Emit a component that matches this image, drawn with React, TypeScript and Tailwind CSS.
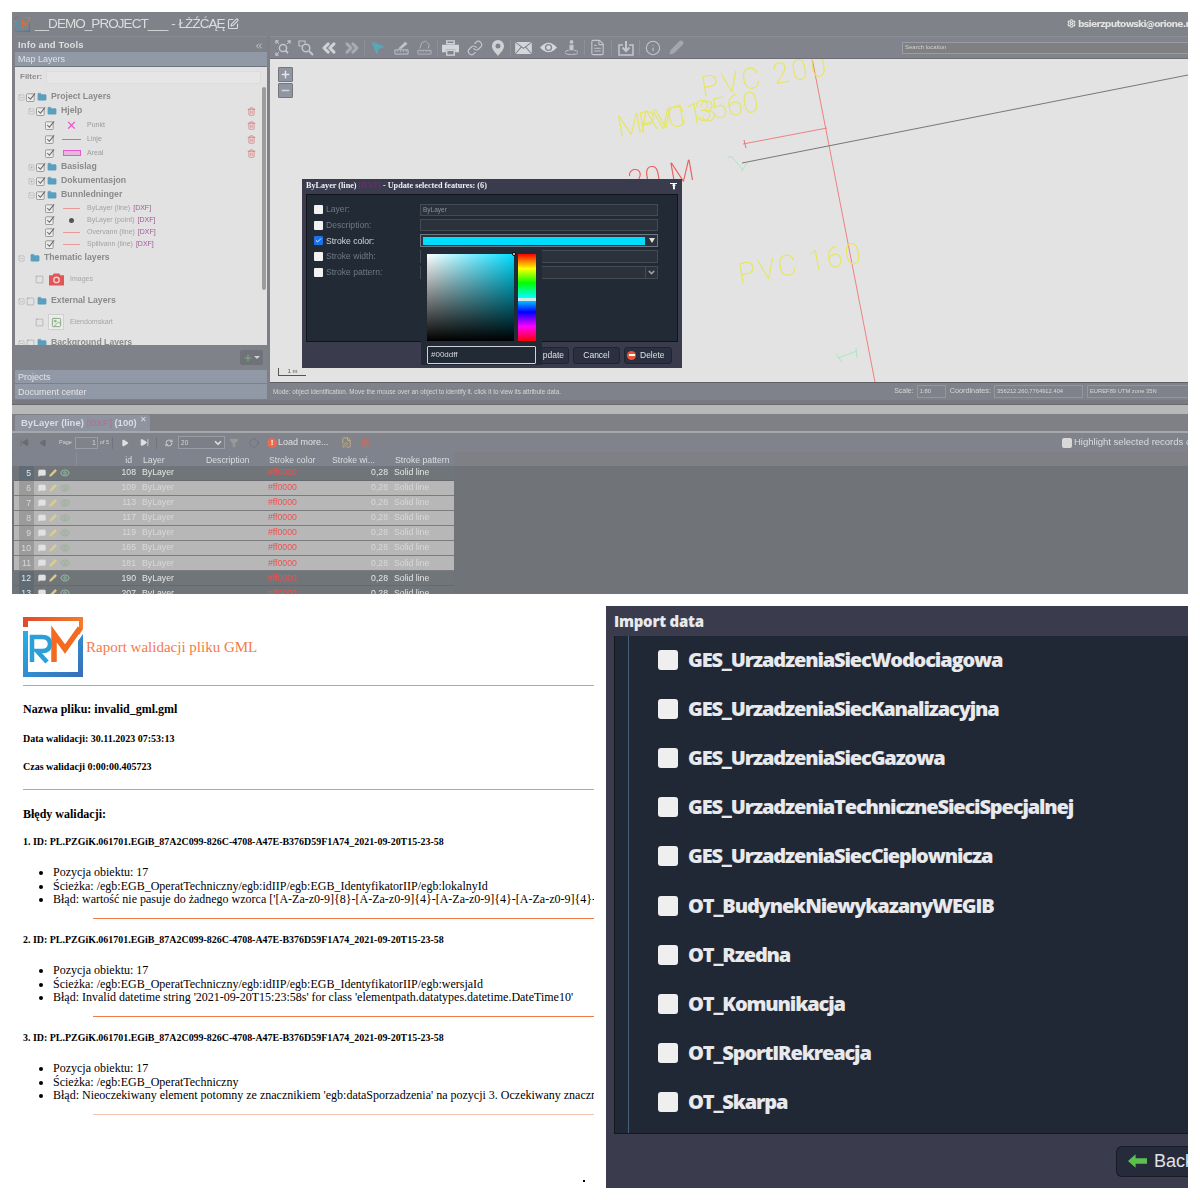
import React from 'react';
import {
  ChevronsLeft, ChevronsRight, MousePointer2, Link, FileText, Info, Pencil,
  Folder, Trash2, Square, SquarePlus, SquareMinus, Settings, SquarePen, Plus, Minus, ChevronDown, Check, Image, RefreshCw, Circle,
  SkipBack, SkipForward, Play, FilePen, MessageSquare, Funnel, Eye
} from 'lucide-react';

function Logo({ className }: { className: string }) {
  return (
    <svg viewBox="0 0 60 60" className={className}>
      <defs>
        <linearGradient id="rmTop" x1="0" x2="1" y1="0" y2="0"><stop offset="0" stopColor="#e2492a" /><stop offset="1" stopColor="#f47b2c" /></linearGradient>
        <linearGradient id="rmBlue" x1="0" x2="1" y1="0" y2="1"><stop offset="0" stopColor="#26b0e8" /><stop offset="1" stopColor="#3a6cb8" /></linearGradient>
      </defs>
      <path d="M0 0H60V12L56 18V4H5V10H0Z" fill="url(#rmTop)" />
      <path d="M0 14H5V55H55V24L60 17V60H0Z" fill="url(#rmBlue)" />
      <path d="M9 45V20H19Q27 20 27 27Q27 34 19 34H14L24 45" fill="none" stroke="#2a9fd8" strokeWidth="4.5" />
      <path d="M31 45V17L42 32L57 11" fill="none" stroke="#f26b21" strokeWidth="5.5" />
    </svg>
  );
}

function Tool({ slot, children }: { slot: string; children: React.ReactNode }) {
  return <div className={`${slot} h-[15px] flex items-center justify-center shrink-0 text-[#c4c6cb]`}>{children}</div>;
}

function TreeBox() {
  return (
    <svg viewBox="0 0 11 11" className="w-[10px] h-[10px] shrink-0">
      <rect x="0.5" y="2" width="8.5" height="8.5" rx="1" fill="#ececec" stroke="#929292" strokeWidth="1" />
      <path d="M2.5 5.5L4.8 8L10 1.5" fill="none" stroke="#666" strokeWidth="1.2" />
    </svg>
  );
}

function Group({ h, pad, open = true, name, box = true, gap = 'ml-[1px]', trash = false }: { h: string; pad: string; open?: boolean; name: string; box?: boolean; gap?: string; trash?: boolean }) {
  return (
    <div className={`${h} ${pad} flex items-center relative`}>
      {open ? <SquareMinus size={7} strokeWidth={1.2} className="text-[#909090] shrink-0" /> : <SquarePlus size={7} strokeWidth={1.2} className="text-[#909090] shrink-0" />}
      <span className="ml-[1px] flex"><span className={box ? 'flex' : 'hidden'}><TreeBox /></span></span>
      <Folder size={10} fill="#5a9fbb" strokeWidth={1} className={`text-[#5a9fbb] shrink-0 ${gap}`} />
      <span className="ml-[4px] text-[8.7px] font-bold text-[#8a8a8a]">{name}</span>
      {trash && <Trash2 size={9} strokeWidth={1.5} className="absolute right-[11px] top-[3px] text-[#d85a5a]" />}
    </div>
  );
}

function Legend({ name, children }: { name: string; children: React.ReactNode }) {
  return (
    <div className="h-[14px] pl-[27px] flex items-center relative">
      <TreeBox />
      <span className="w-[29px] ml-[2px] flex items-center justify-center">{children}</span>
      <span className="text-[7px] text-[#9a9a9a] ml-[1px]">{name}</span>
      <Trash2 size={9} strokeWidth={1.5} className="absolute right-[11px] top-[3px] text-[#d85a5a]" />
    </div>
  );
}

function Dxf({ name, children }: { name: string; children: React.ReactNode }) {
  return (
    <div className="h-[12px] pl-[27px] flex items-center">
      <TreeBox />
      <span className="w-[29px] ml-[2px] flex items-center justify-center">{children}</span>
      <span className="text-[7px] text-[#a2a2a2] ml-[1px]">{name}</span>
      <span className="text-[7px] text-[#a05a98] ml-[3px]">[DXF]</span>
    </div>
  );
}

function FormRow({ label, active = false, on = false, children }: { label: string; active?: boolean; on?: boolean; children?: React.ReactNode }) {
  return (
    <div className="h-[15.6px] flex items-center">
      <span className={`w-[9px] h-[9px] rounded-[1px] flex items-center justify-center ml-[7px] shrink-0 ${on ? 'bg-[#1a73e8]' : 'bg-[#f2f2f2]'}`}>
        {on && <Check size={7} strokeWidth={3} className="text-white" />}
      </span>
      <span className={`ml-[3px] w-[92px] text-[8.6px] ${active ? 'text-[#d4d8dd]' : 'text-[#707a84]'}`}>{label}</span>
      {children}
    </div>
  );
}

const rows = [
  ['5', '108', false], ['6', '109', true], ['7', '113', true], ['8', '117', true], ['9', '119', true],
  ['10', '165', true], ['11', '181', true], ['12', '190', false], ['13', '207', false],
] as const;

const features = [
  'GES_UrzadzeniaSiecWodociagowa', 'GES_UrzadzeniaSiecKanalizacyjna', 'GES_UrzadzeniaSiecGazowa', 'GES_UrzadzeniaTechniczneSieciSpecjalnej',
  'GES_UrzadzeniaSiecCieplownicza', 'OT_BudynekNiewykazanyWEGIB', 'OT_Rzedna', 'OT_Komunikacja', 'OT_SportIRekreacja', 'OT_Skarpa',
];

const errors = [
  { n: '1', path: '/egb:EGB_OperatTechniczny/egb:idIIP/egb:EGB_IdentyfikatorIIP/egb:lokalnyId', msg: "wartość nie pasuje do żadnego wzorca ['[A-Za-z0-9]{8}-[A-Za-z0-9]{4}-[A-Za-z0-9]{4}-[A-Za-z0-9]{4}-[A-Za-z0-9]{12}']", line: 'bg-[#f07c42]' },
  { n: '2', path: '/egb:EGB_OperatTechniczny/egb:idIIP/egb:EGB_IdentyfikatorIIP/egb:wersjaId', msg: "Invalid datetime string '2021-09-20T15:23:58s' for class 'elementpath.datatypes.datetime.DateTime10'", line: 'bg-[#f07c42]' },
  { n: '3', path: '/egb:EGB_OperatTechniczny', msg: "Nieoczekiwany element potomny ze znacznikiem 'egb:dataSporzadzenia' na pozycji 3. Oczekiwany znacznik to", line: 'bg-[#f6c4ae]' },
];

const sw = { fill: 'none', stroke: 'currentColor', strokeWidth: 1.5 };

export default function App() {
  return (
    <div className="w-[1200px] h-[1200px] bg-white p-3 flex flex-col overflow-hidden font-['Liberation_Sans',sans-serif]">
      {/* GIS application */}
      <div className="w-[1176px] h-[582px] shrink-0 bg-[#7f8085] overflow-hidden flex flex-col blur-[0.3px]">
        <div className="h-[24px] shrink-0 bg-[#80828a] flex items-center pl-[3px] pr-0 justify-between">
          <div className="flex items-center">
            <Logo className="w-[15px] h-[15px] opacity-70" />
            <span className="ml-[5px] text-[13.5px] tracking-[-0.95px] [word-spacing:1px] text-[#dcdcdc]">__DEMO_PROJECT___ - ŁŻŹĆĄĘ</span>
            <SquarePen size={12} strokeWidth={2.2} className="ml-[2px] text-[#dcdcdc]" />
          </div>
          <div className="flex items-center text-[#e2e2e2] whitespace-nowrap overflow-hidden w-[121px]">
            <Settings size={9} strokeWidth={3} className="shrink-0" />
            <span className="ml-[2px] text-[9.2px] font-bold font-['DejaVu_Sans',sans-serif] tracking-[-0.75px]">bsierzputowski@orione.no</span>
          </div>
        </div>

        <div className="h-[364px] shrink-0 flex">
          {/* left panel */}
          <div className="w-[255px] shrink-0 pl-[3px] flex flex-col">
            <div className="h-[16px] shrink-0 bg-[#7f828b] flex items-center justify-between px-[3px] pt-[2px] border-t border-[#8a8c93]">
              <span className="text-[9.5px] font-bold text-[#dedede] tracking-[0.1px]">Info and Tools</span>
              <ChevronsLeft size={10} className="text-[#d6d6d6]" />
            </div>
            <div className="h-[15px] shrink-0 bg-[#9299a6] border-b border-[#6f737c] flex items-center px-[3px] pt-[2px] text-[9px] text-[#dfe2e6]">Map Layers</div>
            <div className="h-[20px] shrink-0 bg-[#e2e2e2] flex items-center px-[5px]">
              <span className="text-[8px] font-bold text-[#8e8e8e]">Filter:</span>
              <div className="ml-[4px] flex-1 h-[13px] bg-[#e6e6e6] border border-[#dcdcdc] mr-[1px]" />
            </div>
            <div className="h-[258px] shrink-0 bg-[#e2e2e2] overflow-hidden relative pt-[3px] pl-[3px]">
              <div className="absolute right-[1px] top-0 w-[4px] h-[203px] bg-[#9c9c9c] rounded-[2px]" />
              <Group h="h-[14px]" pad="pl-0" name="Project Layers" />
              <Group h="h-[14px]" pad="pl-[10px]" name="Hjelp" trash />
              <Legend name="Punkt"><span className="text-[13px] leading-none text-[#e85ac8]">✕</span></Legend>
              <Legend name="Linje"><span className="w-[19px] h-[1px] bg-[#e85ac8] block" /></Legend>
              <Legend name="Areal"><span className="w-[18px] h-[6px] bg-[#e4b8dc] border border-[#e85ac8] block" /></Legend>
              <Group h="h-[14px]" pad="pl-[10px]" open={false} name="Basislag" />
              <Group h="h-[14px]" pad="pl-[10px]" open={false} name="Dokumentasjon" />
              <Group h="h-[14px]" pad="pl-[10px]" name="Bunnledninger" />
              <Dxf name="ByLayer (line)"><span className="w-[17px] h-[1px] bg-[#e89a9a] block" /></Dxf>
              <Dxf name="ByLayer (point)"><span className="w-[5px] h-[5px] rounded-full bg-[#555] block" /></Dxf>
              <Dxf name="Overvann (line)"><span className="w-[17px] h-[1px] bg-[#e89a9a] block" /></Dxf>
              <Dxf name="Spillvann (line)"><span className="w-[17px] h-[1px] bg-[#e89a9a] block" /></Dxf>
              <Group h="h-[16px]" pad="pl-0" name="Thematic layers" box={false} gap="ml-[4px]" />
              <div className="h-[26px] pl-[17px] flex items-center">
                <Square size={9} strokeWidth={1.2} className="text-[#8b8b8b]" />
                <svg viewBox="0 0 16 13" className="ml-[5px] w-[15px] h-[13px]">
                  <path d="M0 2H4L5 0H11L12 2H16V13H0Z" fill="#e25555" />
                  <circle cx="8" cy="7" r="3.6" fill="#f4d0d0" />
                  <circle cx="8" cy="7" r="2.2" fill="#e25555" />
                </svg>
                <span className="ml-[6px] text-[7px] text-[#a6a6a6]">Images</span>
              </div>
              <div className="h-[18px] flex items-center">
                <SquareMinus size={7} strokeWidth={1.2} className="text-[#909090]" />
                <Square size={9} strokeWidth={1.2} className="ml-[1px] text-[#8b8b8b]" />
                <Folder size={10} fill="#5a9fbb" strokeWidth={1} className="ml-[2px] text-[#5a9fbb]" />
                <span className="ml-[4px] text-[8.7px] font-bold text-[#8a8a8a]">External Layers</span>
              </div>
              <div className="h-[24px] pl-[17px] flex items-center">
                <Square size={9} strokeWidth={1.2} className="text-[#8b8b8b]" />
                <span className="ml-[4px] w-[16px] h-[16px] border border-[#cfcfcf] bg-[#ececec] flex items-center justify-center">
                  <Image size={11} className="text-[#7fa678]" />
                </span>
                <span className="ml-[6px] text-[7px] text-[#a6a6a6]">Eiendomskart</span>
              </div>
              <div className="h-[14px] mt-[2px] flex items-center">
                <SquareMinus size={7} strokeWidth={1.2} className="text-[#909090]" />
                <Square size={9} strokeWidth={1.2} className="ml-[1px] text-[#8b8b8b]" />
                <Folder size={10} fill="#5a9fbb" strokeWidth={1} className="ml-[2px] text-[#5a9fbb]" />
                <span className="ml-[4px] text-[8.7px] font-bold text-[#8a8a8a]">Background Layers</span>
              </div>
            </div>
            <div className="h-[25px] shrink-0 bg-[#7f8289] flex items-center justify-end pr-[4px]">
              <div className="w-[23px] h-[15px] rounded-[2px] bg-[#6f7278] flex items-center justify-center">
                <Plus size={10} strokeWidth={2.5} className="text-[#7fae78]" />
                <span className="ml-[1px] border-x-[3px] border-t-[3px] border-x-transparent border-t-[#d0d0d0]" />
              </div>
            </div>
            <div className="h-[14px] shrink-0 bg-[#9299a6] border-b border-[#7c808a] flex items-center px-[3px] pt-[2px] text-[9px] text-[#e2e4e8]">Projects</div>
            <div className="h-[15px] shrink-0 bg-[#9299a6] flex items-center px-[3px] pt-[2px] text-[9px] text-[#e2e4e8]">Document center</div>
          </div>

          {/* map column */}
          <div className="flex-1 ml-[3px] flex flex-col min-w-0">
            <div className="h-[23px] shrink-0 bg-[#81848c] border-t border-[#8c8e95] border-b-[1px] border-b-[#6c6e74] flex items-center pl-[2px]">
              <Tool slot="w-[22.5px]">
                <svg viewBox="0 0 16 16" className="w-[16px] h-[16px]" {...sw}><circle cx="8" cy="8" r="3.6" /><path d="M10.6 10.6L13 13" strokeWidth="2" /><path d="M1 3.5V1H3.5M15 3.5V1H12.5M1 12.5V15H3.5" strokeWidth="1.4" /><path d="M1.5 1.5L4 4M14.5 1.5L12 4M1.5 14.5L4 12" strokeWidth="1" /></svg>
              </Tool>
              <Tool slot="w-[22.5px]">
                <svg viewBox="0 0 16 16" className="w-[16px] h-[16px]" {...sw}><path d="M4.5 6H1V1H7V3.5" strokeWidth="1.1" /><circle cx="8" cy="8" r="3.8" /><path d="M11 11L15 15" strokeWidth="2" /></svg>
              </Tool>
              <Tool slot="w-[23px]"><ChevronsLeft size={20} strokeWidth={3.6} className="text-[#d0d2d6]" /></Tool>
              <Tool slot="w-[24.5px] border-r border-[#8e9097]"><ChevronsRight size={20} strokeWidth={3.6} className="text-[#a9abb0]" /></Tool>
              <Tool slot="w-[25px]"><MousePointer2 size={15} fill="#5ba6b8" className="text-[#5ba6b8]" /></Tool>
              <Tool slot="w-[23px]">
                <svg viewBox="0 0 16 16" className="w-[15px] h-[15px]" {...sw}><path d="M1 10.5H15V15H1Z" strokeWidth="1" /><path d="M4 11V13M7 11V13M10 11V13M13 11V13" strokeWidth="0.8" /><path d="M5 9L12 2L14 4L8 9Z" fill="currentColor" strokeWidth="0.6" /></svg>
              </Tool>
              <Tool slot="w-[25.5px] border-r border-[#8e9097]">
                <svg viewBox="0 0 16 16" className="w-[15px] h-[15px] text-[#b2b4b9]" {...sw}><path d="M1 11H15V15H1Z" strokeWidth="1" /><path d="M4 11V13M7 11V13M10 11V13M13 11V13" strokeWidth="0.8" /><path d="M3 9L5 3L9 1L13 5L12 9" strokeWidth="1" /></svg>
              </Tool>
              <Tool slot="w-[25.5px]">
                <svg viewBox="0 0 18 17" className="w-[17px] h-[16px] text-[#d4d6da]"><path d="M5 4V1H13V4H5Z" fill="none" stroke="currentColor" strokeWidth="1.4" /><path d="M0 5H18V13H14V10H4V13H0Z" fill="currentColor" /><path d="M5 11H13V16H5Z" fill="none" stroke="currentColor" strokeWidth="1.4" /></svg>
              </Tool>
              <Tool slot="w-[22.5px]"><Link size={16} strokeWidth={1.8} /></Tool>
              <Tool slot="w-[25px] border-r border-[#8e9097]">
                <svg viewBox="0 0 12 16" className="w-[12px] h-[16px] text-[#d0d2d6]"><path fillRule="evenodd" d="M6 0A6 6 0 0 1 12 6C12 10 8 13 6 16C4 13 0 10 0 6A6 6 0 0 1 6 0ZM6 3.5A2.5 2.5 0 1 0 6 8.5A2.5 2.5 0 1 0 6 3.5Z" fill="currentColor" /></svg>
              </Tool>
              <Tool slot="w-[25.5px]">
                <svg viewBox="0 0 18 13" className="w-[17px] h-[12px] text-[#d4d6da]"><rect width="18" height="13" fill="currentColor" /><path d="M0 0L9 7L18 0M0 13L6.5 5.5M18 13L11.5 5.5" fill="none" stroke="#81848c" strokeWidth="1.1" /></svg>
              </Tool>
              <Tool slot="w-[23px]">
                <svg viewBox="0 0 17 11" className="w-[17px] h-[11px] text-[#d4d6da]"><path d="M0 5.5Q8.5 -4 17 5.5Q8.5 15 0 5.5Z" fill="currentColor" /><circle cx="8.5" cy="5.5" r="3.6" fill="#81848c" /><circle cx="8.5" cy="5.5" r="2.3" fill="currentColor" /></svg>
              </Tool>
              <Tool slot="w-[25px] border-r border-[#8e9097]">
                <svg viewBox="0 0 14 16" className="w-[13px] h-[15px]"><circle cx="7" cy="2" r="2" fill="currentColor" /><path d="M4.8 5H9.2V11H4.8Z" fill="currentColor" /><path d="M4 11C1 11.5 0 12.5 0 13.5C0 15 3 15.5 7 15.5C11 15.5 14 15 14 13.5C14 12.5 13 11.5 10 11" fill="none" stroke="currentColor" strokeWidth="1" /></svg>
              </Tool>
              <Tool slot="w-[27.5px] border-r border-[#8e9097]"><FileText size={17} strokeWidth={1.6} /></Tool>
              <Tool slot="w-[28px] border-r border-[#8e9097]">
                <svg viewBox="0 0 16 16" className="w-[16px] h-[16px]" {...sw}><path d="M5 5H1V15H15V5H11" /><path d="M8 1V10" strokeWidth="2" /><path d="M4.5 7.5L8 11L11.5 7.5" strokeWidth="2" /></svg>
              </Tool>
              <Tool slot="w-[25px]"><Info size={16} strokeWidth={1.6} /></Tool>
              <Tool slot="w-[22px]"><Pencil size={15} fill="#a5a7ac" className="text-[#a5a7ac]" /></Tool>
              <div className="ml-auto w-[286px] h-[12px] bg-[#808080] border-y border-l border-[#9a9da5] flex items-center pl-[2px] text-[6px] text-[#d0d0d0]">Search location</div>
            </div>
            <div className="h-[323px] shrink-0 bg-[#e3e3e3] relative overflow-hidden">
              <svg viewBox="270 59 918 323" className="absolute inset-0 w-[918px] h-[323px]">
                <line x1="812" y1="58" x2="875" y2="382" stroke="#ee8080" strokeWidth="1" />
                <line x1="743" y1="144" x2="827" y2="128" stroke="#ee8080" strokeWidth="1" />
                <line x1="744" y1="140" x2="746" y2="148" stroke="#ee7070" strokeWidth="1" />
                <line x1="742" y1="163" x2="1188" y2="75" stroke="#777" strokeWidth="1" />
                <path d="M728 157L732 157L743 170M741 172L747 163" fill="none" stroke="#a8e8c0" strokeWidth="1" />
                <path d="M836 354L842 362M838 358L857 351M856 348L857 358" fill="none" stroke="#a8e8c0" strokeWidth="1" />
                <g fontFamily="Roboto, sans-serif" fontWeight="200" fill="#e6e660" fontSize="29">
                  <text transform="translate(703 97) rotate(-10)" letterSpacing="3">PVC 200</text>
                  <text transform="translate(740 284) rotate(-10)" letterSpacing="2.6">PVC 160</text>
                  <text transform="translate(619 137) rotate(-10)" letterSpacing="-3">MPVC 13</text>
                  <text transform="translate(641 132) rotate(-10)" letterSpacing="0">AV1 3560</text>
                </g>
                <text transform="translate(630 191) rotate(-10)" fontFamily="Roboto, sans-serif" fontWeight="200" fill="#e86060" fontSize="29" letterSpacing="1">20 M</text>
              </svg>

              <div className="absolute left-[8px] top-[8px] w-[15px] flex flex-col gap-[1px]">
                <div className="h-[15px] bg-[#8f95a3] border border-[#777] rounded-[1px] flex items-center justify-center"><Plus size={11} strokeWidth={3} className="text-[#e6e6e6]" /></div>
                <div className="h-[15px] bg-[#8f95a3] border border-[#777] rounded-[1px] flex items-center justify-center"><Minus size={11} strokeWidth={3} className="text-[#d6d6d6]" /></div>
              </div>

              <div className="absolute left-[8px] bottom-[6px] w-[28px] h-[8px] border-l border-b border-[#555] text-[6px] leading-[7px] text-[#555] text-center">1 m</div>

              {/* dialog */}
              <div className="absolute left-[32px] top-[120px] w-[380px] h-[189px] bg-[#3a3c4d] flex flex-col">
                <div className="h-[15px] shrink-0 flex items-center justify-between pl-[4px] pr-[5px] text-[8.2px] font-bold font-['Liberation_Serif',serif] text-[#eef0f3]">
                  <span>ByLayer (line) <span className="text-[#6b2d6b]">[DXF]</span> - Update selected features: (6)</span>
                  <div className="w-[7px] h-[8px] border-t border-white flex justify-center"><span className="text-[7px] leading-[7px] text-white">⬆</span></div>
                </div>
                <div className="h-[148px] shrink-0 mx-[4px] bg-[#212a35] border border-[#10141a] pt-[2px] flex flex-col">
                  <div className="mt-[5px]" />
                  <FormRow label="Layer:"><div className="ml-[2px] w-[238px] h-[12px] bg-[#2c323c] border border-[#454b55] text-[6.5px] leading-[10px] pl-[2px] text-[#8a9098]">ByLayer</div></FormRow>
                  <FormRow label="Description:"><div className="ml-[2px] w-[238px] h-[12px] bg-[#2c323c] border border-[#454b55]" /></FormRow>
                  <FormRow label="Stroke color:" active on>
                    <div className="ml-[2px] w-[238px] h-[13px] bg-[#2c323c] border border-[#6e7785] flex items-center pl-[2px]">
                      <div className="w-[222px] h-[8px] bg-[#00ddff]" />
                      <span className="ml-[4px] border-x-[3px] border-t-[5px] border-x-transparent border-t-[#e0e0e0]" />
                    </div>
                  </FormRow>
                  <FormRow label="Stroke width:"><div className="ml-[2px] w-[238px] h-[13px] bg-[#2c323c] border border-[#454b55]" /></FormRow>
                  <FormRow label="Stroke pattern:">
                    <div className="ml-[2px] w-[238px] h-[13px] bg-[#2c323c] border border-[#454b55] flex justify-end">
                      <div className="w-[12px] border-l border-[#454b55] flex items-center justify-center"><ChevronDown size={9} strokeWidth={4} className="text-[#9aa0a8]" /></div>
                    </div>
                  </FormRow>
                </div>
                <div className="flex-1 flex items-center justify-end pr-[10px] gap-[4px]">
                  <div className="w-[60px] h-[17px] rounded-[3px] bg-[#2a3040] border border-[#20242e] text-[8.5px] leading-[15px] text-[#dfe1e4] text-right pr-[4px]">Update</div>
                  <div className="w-[47px] h-[17px] rounded-[3px] bg-[#2a3040] border border-[#20242e] text-[8.5px] leading-[15px] text-[#dfe1e4] text-center">Cancel</div>
                  <div className="w-[48px] h-[17px] rounded-[3px] bg-[#2a3040] border border-[#20242e] flex items-center pl-[2px] text-[8.5px] text-[#dfe1e4]">
                    <span className="w-[9px] h-[9px] rounded-full bg-[#e8553a] flex items-center justify-center"><span className="w-[6px] h-[2px] bg-white" /></span>
                    <span className="ml-[4px]">Delete</span>
                  </div>
                </div>
                {/* colour picker */}
                <div className="absolute left-[119px] top-[71px] w-[121px] h-[115px] bg-[#222a35] pt-[4px] pl-[6px]">
                  <div className="flex gap-[4px]">
                    <div className="w-[87px] h-[87px] bg-[linear-gradient(to_top,#000,transparent),linear-gradient(to_right,#fff,#00ddff)] relative">
                      <span className="absolute -right-[2px] -top-[2px] w-[4px] h-[4px] rounded-full bg-white border border-black" />
                    </div>
                    <div className="w-[18px] h-[87px] relative bg-[linear-gradient(to_bottom,#f00,#ff0,#0f0,#0ff,#00f,#f0f,#f00)]">
                      <span className="absolute left-0 right-0 top-[44px] h-[3px] bg-[#cfe8ea]" />
                    </div>
                  </div>
                  <div className="mt-[5px] w-[109px] h-[18px] border border-[#cfd2d6] rounded-[1px] text-[8px] leading-[16px] pl-[3px] text-[#d4d6da] bg-[#212a35]">#00ddff</div>
                </div>
              </div>
            </div>
            <div className="h-[18px] shrink-0 bg-[#7f828a] border-t border-[#5e6066] flex items-center pl-[3px] text-[5.8px] text-[#d8d8d8]">
              <span className="text-[6.3px]">Mode: object identification. Move the mouse over an object to identify it. click it to view its attribute data.</span>
              <span className="ml-auto text-[7px]">Scale:</span>
              <div className="ml-[3px] w-[29px] h-[13px] border border-[#94979e] pl-[2px] leading-[11px]">1:80</div>
              <span className="ml-[4px] text-[7.3px]">Coordinates:</span>
              <div className="ml-[3px] w-[89px] h-[13px] border border-[#94979e] pl-[2px] leading-[11px]">356212.260,7764912.404</div>
              <div className="ml-[4px] w-[101px] h-[13px] border-y border-l border-[#94979e] pl-[2px] leading-[11px]">EUREF89 UTM zone 35N</div>
            </div>
          </div>
        </div>

        <div className="h-[5px] shrink-0 bg-[#787a7f] border-b border-[#66686c]" />
        <div className="h-[9px] shrink-0 bg-[#b8b8b8]" />

        <div className="h-[19px] shrink-0 flex items-end pl-[3px] border-b-[2px] border-[#a6a7aa]">
          <div className="w-[135px] h-[16px] rounded-t-[2px] bg-[#8e93a0] pl-[6px] flex items-center text-[9.5px] font-bold text-[#dadde2] whitespace-nowrap">
            ByLayer (line)&nbsp;<span className="text-[#a57a98]">[DXF]</span>&nbsp;(100)
            <span className="ml-[3px] -mt-[7px] text-[8px] font-normal text-[#dcdcdc]">✕</span>
          </div>
        </div>

        <div className="h-[19px] shrink-0 bg-[#80838b] flex items-center text-[#d4d4d4]">
          <span className="w-[8px] shrink-0" />
          <SkipBack size={9} fill="#696c73" className="text-[#696c73]" />
          <span className="ml-[10px] flex"><Play size={8} fill="#696c73" className="rotate-180 text-[#696c73]" /></span>
          <span className="ml-[12px] text-[5.5px]">Page</span>
          <div className="ml-[3px] w-[23px] h-[12px] border border-[#9a9da5] text-right pr-[1px] text-[7px] leading-[10px]">1</div>
          <span className="ml-[2px] text-[5.5px]">of 5</span>
          <span className="ml-[3px] w-[1px] h-[12px] bg-[#72757c]" />
          <span className="ml-[8px] flex"><Play size={8} fill="#e0e0e0" className="text-[#e0e0e0]" /></span>
          <span className="ml-[11px] flex"><SkipForward size={9} fill="#e0e0e0" className="text-[#e0e0e0]" /></span>
          <span className="ml-[7px] w-[1px] h-[12px] bg-[#72757c]" />
          <span className="ml-[8px] flex"><RefreshCw size={8} strokeWidth={2.5} className="text-[#d8d8d8]" /></span>
          <div className="ml-[5px] w-[47px] h-[13px] bg-[#7c7f87] border border-[#9a9da5] flex items-center justify-between pl-[2px] pr-[1px] text-[6.5px]">
            <span>20</span>
            <ChevronDown size={10} strokeWidth={4} className="text-[#e0e0e0]" />
          </div>
          <span className="ml-[4px] flex"><Funnel size={10} fill="#9a9a9a" className="text-[#9a9a9a]" /></span>
          <span className="ml-[10px] flex"><Circle size={10} strokeWidth={2} className="text-[#6f7279]" /></span>
          <span className="ml-[8px] w-[10px] h-[10px] rounded-full bg-[#e86a50] text-white text-[8px] leading-[10px] text-center font-bold">!</span>
          <span className="ml-[1px] text-[9px] text-[#dfe0e2]">Load more...</span>
          <span className="ml-[12px] flex"><FilePen size={11} className="text-[#c8b080]" /></span>
          <span className="ml-[8px] flex"><Trash2 size={10} className="text-[#d06a5a]" /></span>
          <div className="ml-auto w-[126px] overflow-hidden whitespace-nowrap flex items-center">
            <span className="w-[10px] h-[10px] rounded-[2px] bg-[#d8d8d8] shrink-0" />
            <span className="ml-[2px] text-[9.5px] text-[#dcdde0]">Highlight selected records only</span>
          </div>
        </div>

        <div className="w-[440px] h-[15px] shrink-0 bg-[#7f838d] ml-[2px] flex text-[8.7px] text-[#dcdde0] leading-[17px]">
          <div className="w-[20px]" />
          <div className="w-[43px] border-r border-[#8a8e98]" />
          <div className="w-[62px] text-right pr-[7px]">id</div>
          <div className="w-[63px] pl-[4px]">Layer</div>
          <div className="w-[63px] pl-[4px]">Description</div>
          <div className="w-[63px] pl-[4px]">Stroke color</div>
          <div className="w-[63px] pl-[4px]">Stroke wi...</div>
          <div className="w-[61px] pl-[4px]">Stroke pattern</div>
        </div>

        <div className="flex-1 overflow-hidden bg-[#707377] -mt-[1.5px]">
          {rows.map(([num, id, sel]) => (
            <div key={num} className={`w-[440px] ml-[2px] h-[15.1px] flex items-center text-[8.7px] border-b ${sel ? 'bg-[#b7b7b7] text-[#d8d8d8] border-[#7a7c80]' : 'bg-[#707579] text-[#e6e6e6] border-[#666a6e]'}`}>
              <div className={`w-[15px] ml-[5px] h-full text-right pr-[3px] leading-[14px] ${sel ? 'bg-[#9b9b9b]' : 'bg-[#5f6c76]'}`}>{num}</div>
              <div className="w-[43px] flex items-center pl-[4px] gap-[3px]">
                <MessageSquare size={8} fill="#e2e2e2" className="text-[#e2e2e2]" />
                <Pencil size={8} fill="#dccf8a" className="text-[#dccf8a]" />
                <Eye size={10} strokeWidth={2.5} className={sel ? 'text-[#9cb09c]' : 'text-[#8fb59c]'} />
              </div>
              <div className="w-[62px] text-right pr-[3px]">{id}</div>
              <div className="w-[63px] pl-[3px]">ByLayer</div>
              <div className="w-[63px]" />
              <div className="w-[63px] pl-[3px] text-[#f05050]">#ff0000</div>
              <div className="w-[63px] text-right pr-[3px]">0,28</div>
              <div className="w-[61px] pl-[3px]">Solid line</div>
            </div>
          ))}
        </div>
      </div>

      <div className="h-[594px] shrink-0 flex gap-3">
        {/* report */}
        <div className="w-[582px] shrink-0 bg-white overflow-hidden pl-[11px] font-['Liberation_Serif',serif] text-black relative">
          <div className="h-[91px] flex items-end pb-[8px]">
            <div className="flex items-center h-[60px]">
              <Logo className="w-[60px] h-[60px]" />
              <span className="ml-[3px] text-[15px] text-[#f37a4a]">Raport walidacji pliku GML</span>
            </div>
          </div>
          <div className="h-[1px] bg-[#aaa]" />
          <div className="mt-[16px] text-[12px] leading-[14px] font-bold">Nazwa pliku: invalid_gml.gml</div>
          <div className="mt-[17px] text-[10px] leading-[12px] font-bold">Data walidacji: 30.11.2023 07:53:13</div>
          <div className="mt-[16px] text-[10px] leading-[12px] font-bold">Czas walidacji 0:00:00.405723</div>
          <div className="mt-[16px] h-[1px] bg-[#aaa]" />
          <div className="mt-[17px] text-[12px] leading-[14px] font-bold">Błędy walidacji:</div>
          <div className="mt-[15px]">
            {errors.map((e) => (
              <div key={e.n} className="h-[98px]">
                <div className="text-[9.95px] leading-[12px] font-bold whitespace-nowrap">{e.n}. ID: PL.PZGiK.061701.EGiB_87A2C099-826C-4708-A47E-B376D59F1A74_2021-09-20T15-23-58</div>
                <ul className="mt-[18px] pl-[30px] list-disc text-[12px] leading-[13.6px] whitespace-nowrap overflow-hidden">
                  <li>Pozycja obiektu: 17</li>
                  <li>Ścieżka: {e.path}</li>
                  <li>Błąd: {e.msg}</li>
                </ul>
                <div className={`mt-[11px] ml-[70px] h-[1px] ${e.line}`} />
              </div>
            ))}
          </div>
          <span className="absolute left-[571px] bottom-[6px] w-[2px] h-[2px] bg-black" />
        </div>

        {/* import panel */}
        <div className="w-[582px] h-[582px] mt-3 shrink-0 bg-[#3a3c4d] flex flex-col overflow-hidden">
          <div className="h-[30px] shrink-0 flex items-center pl-[8px] pt-[1px] text-[15px] font-extrabold tracking-[-0.25px] font-['Open_Sans',sans-serif] text-[#e8e9ec]">Import data</div>
          <div className="h-[498px] shrink-0 ml-[8px] bg-[#212835] border-l border-[#15181f] border-b border-b-[#15181f] relative">
            <div className="absolute left-[13px] top-0 bottom-0 w-[1px] bg-[#4a5f78]" />
            <div className="-mt-[1px] pl-[43px]">
              {features.map((f) => (
                <div key={f} className="h-[49.2px] flex items-center">
                  <span className="w-[20px] h-[20px] rounded-[3px] bg-[#efefef] shrink-0" />
                  <span className="ml-[10px] text-[20px] font-extrabold font-['Open_Sans',sans-serif] tracking-[-1.15px] text-[#e8e9ec]">{f}</span>
                </div>
              ))}
            </div>
          </div>
          <div className="flex-1 flex items-center justify-end">
            <div className="w-[72px] h-[31px] rounded-l-[6px] bg-[#252b3a] border border-[#181b24] border-r-0 flex items-center pl-[11px] overflow-hidden">
              <svg viewBox="0 0 20 14" className="w-[19px] h-[14px] shrink-0"><path d="M0 7L8 0V4H20V10H8V14Z" fill="#5cc04e" /></svg>
              <span className="ml-[7px] text-[18px] text-[#e0e2e6]">Back</span>
            </div>
          </div>
        </div>
      </div>
    </div>
  );
}
